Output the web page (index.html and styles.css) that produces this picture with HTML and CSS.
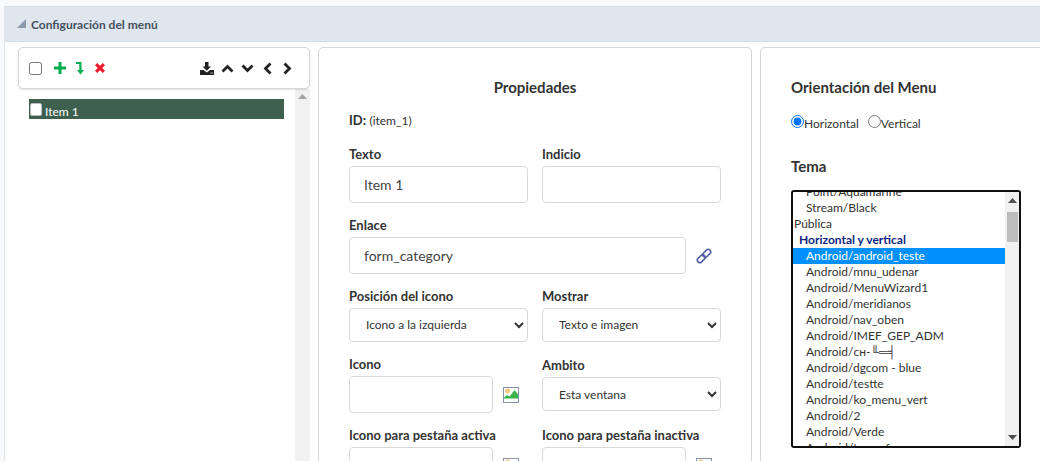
FILE: index.html
```html
<!DOCTYPE html>
<html lang="es">
<head>
<meta charset="utf-8">
<title>Configuración del menú</title>
<link rel="stylesheet" href="styles.css">
</head>
<body>
<div class="page">
  <section class="panel">
    <header class="panel-head">
      <svg class="collapse" width="9" height="9" viewBox="0 0 9 9"><path d="M9 0V9H0Z" fill="#8a99ab"/></svg>
      <span>Configuración del menú</span>
    </header>
    <div class="panel-body">
      <div class="tree-col">
        <div class="toolbar">
          <input type="checkbox" class="check" aria-label="Todo">
          <div class="tools">
            <svg width="12" height="12" viewBox="0 0 12 12"><path d="M4.500 0h3v4.500h4.500v3H7.500V12h-3V7.500H0v-3h4.500Z" fill="#00b050"/></svg>
            <svg width="9" height="14" viewBox="0 0 9 14"><path d="M0 1h5.500v8H8l-3.500 4.500L1 9h2.300V3H0Z" fill="#00b050"/></svg>
            <svg width="10" height="10" viewBox="0 0 11 11"><path d="M2.500 0 5.500 3 8.500 0 11 2.500 8 5.500 11 8.500 8.500 11 5.500 8 2.500 11 0 8.500 3 5.500 0 2.500Z" fill="#ed1c2e"/></svg>
          </div>
          <div class="tools-right">
            <svg width="14" height="13" viewBox="0 0 14 13"><path d="M5 0h3.500v4.500H11L6.800 8.800 2.600 4.500H5ZM0 8h3.500l3.300 2.600L10 8h4v5H0Z" fill="#222"/><path d="M10.500 11h1M12.300 11h.7" stroke="#fff"/></svg>
            <svg width="13" height="9" viewBox="0 0 13 9"><path d="M1.500 7.500 6.500 2.500 11.500 7.500" fill="none" stroke="#222" stroke-width="2.800"/></svg>
            <svg width="13" height="9" viewBox="0 0 13 9"><path d="M1.500 1.500 6.500 6.500 11.500 1.500" fill="none" stroke="#222" stroke-width="2.800"/></svg>
            <svg width="9" height="13" viewBox="0 0 9 13"><path d="M7.500 1.500 2.500 6.500 7.500 11.500" fill="none" stroke="#222" stroke-width="2.800"/></svg>
            <svg width="9" height="13" viewBox="0 0 9 13"><path d="M1.500 1.500 6.500 6.500 1.500 11.500" fill="none" stroke="#222" stroke-width="2.800"/></svg>
          </div>
        </div>
        <div class="tree-wrap">
          <div class="tree">
            <div class="tree-item"><span class="item-box"></span><span class="item-label">Item 1</span></div>
          </div>
          <div class="tree-scroll"><svg width="9" height="5" viewBox="0 0 9 5"><path d="M4.500 0 9 5H0Z" fill="#a3a3a3"/></svg></div>
        </div>
      </div>

      <div class="card props">
        <h3 class="props-title">Propiedades</h3>
        <p class="id-line"><b>ID:</b> <span>(item_1)</span></p>
        <div class="row row-text">
          <label class="field"><span class="lbl">Texto</span><input class="input" value="Item 1"></label>
          <label class="field"><span class="lbl">Indicio</span><input class="input"></label>
        </div>
        <div class="row row-link">
          <label class="field grow"><span class="lbl">Enlace</span>
            <span class="with-icon">
              <input class="input" value="form_category">
              <svg class="link-ico" width="16" height="16" viewBox="0 0 16 16"><g fill="none" stroke="#4f5da3" stroke-width="1.600"><rect x="6.200" y="2.800" width="9" height="5" rx="2.500" transform="rotate(-45 10.700 5.300)"/><rect x=".8" y="8.200" width="9" height="5" rx="2.500" transform="rotate(-45 5.300 10.700)"/></g></svg>
            </span>
          </label>
        </div>
        <div class="row row-select">
          <label class="field"><span class="lbl">Posición del icono</span><select class="select"><option>Icono a la izquierda</option></select></label>
          <label class="field"><span class="lbl">Mostrar</span><select class="select"><option>Texto e imagen</option></select></label>
        </div>
        <div class="row row-icon">
          <label class="field"><span class="lbl">Icono</span>
            <span class="with-icon">
              <input class="input">
              <svg class="img-ico" width="16" height="16" viewBox="0 0 16 16"><rect x=".5" y=".500" width="15" height="15" fill="#fff" stroke="#8494a8"/><circle cx="4.700" cy="4" r="2.500" fill="#efc878"/><path d="M1 11.500V10.500L4 8 6.500 9.500 11.500 3 15 7.500V11.500Z" fill="#3cb34a"/></svg>
            </span>
          </label>
          <label class="field field-shift"><span class="lbl">Ambito</span><select class="select"><option>Esta ventana</option></select></label>
        </div>
        <div class="row row-tabs">
          <label class="field"><span class="lbl">Icono para pestaña activa</span>
            <span class="with-icon">
              <input class="input">
              <svg class="img-ico" width="16" height="16" viewBox="0 0 16 16"><rect x=".5" y=".500" width="15" height="15" fill="#fff" stroke="#8494a8"/><circle cx="4.700" cy="4" r="2.500" fill="#efc878"/><path d="M1 11.500V10.500L4 8 6.500 9.500 11.500 3 15 7.500V11.500Z" fill="#3cb34a"/></svg>
            </span>
          </label>
          <label class="field"><span class="lbl">Icono para pestaña inactiva</span>
            <span class="with-icon">
              <input class="input">
              <svg class="img-ico" width="16" height="16" viewBox="0 0 16 16"><rect x=".5" y=".500" width="15" height="15" fill="#fff" stroke="#8494a8"/><circle cx="4.700" cy="4" r="2.500" fill="#efc878"/><path d="M1 11.500V10.500L4 8 6.500 9.500 11.500 3 15 7.500V11.500Z" fill="#3cb34a"/></svg>
            </span>
          </label>
        </div>
      </div>

      <div class="card theme">
        <h3 class="theme-title">Orientación del Menu</h3>
        <div class="radios">
          <label class="radio"><input type="radio" name="o" checked>Horizontal</label>
          <label class="radio"><input type="radio" name="o">Vertical</label>
        </div>
        <h3 class="theme-title tema">Tema</h3>
        <div class="listbox">
          <div class="list">
            <div class="list-inner">
              <div class="opt">Point/Aquamarine</div>
              <div class="opt">Stream/Black</div>
              <div class="opt top">Pública</div>
              <div class="opt group">Horizontal y vertical</div>
              <div class="opt sel">Android/android_teste</div>
              <div class="opt">Android/mnu_udenar</div>
              <div class="opt">Android/MenuWizard1</div>
              <div class="opt">Android/meridianos</div>
              <div class="opt">Android/nav_oben</div>
              <div class="opt">Android/IMEF_GEP_ADM</div>
              <div class="opt">Android/сн-╙═╡</div>
              <div class="opt">Android/dgcom - blue</div>
              <div class="opt">Android/testte</div>
              <div class="opt">Android/ko_menu_vert</div>
              <div class="opt">Android/2</div>
              <div class="opt">Android/Verde</div>
              <div class="opt">Android/teresaf</div>
            </div>
          </div>
          <div class="list-scroll">
            <svg width="9" height="5" viewBox="0 0 9 5"><path d="M4.500 0 9 5H0Z" fill="#505050"/></svg>
            <div class="thumb"></div>
            <svg class="down" width="9" height="5" viewBox="0 0 9 5"><path d="M0 0H9L4.500 5Z" fill="#505050"/></svg>
          </div>
        </div>
      </div>
    </div>
  </section>
</div>
</body>
</html>
```
FILE: styles.css
```css
* { box-sizing: border-box; }
html, body { margin: 0; height: 100%; overflow: hidden; }
body { background: #f7f9fc; font-family: Lato, "Liberation Sans", sans-serif; color: #333; }
.page { height: 461px; padding: 6px 0 0 4px; overflow: hidden; }
.panel { background: #fff; border-left: 1px solid #dde4ec; height: 455px; }
.panel-head {
  height: 36px; background: #dfe6ee; border-top: 1px solid #d3dde6; border-bottom: 1px solid #d3dde6;
  display: flex; align-items: center; padding-left: 12px; gap: 5px;
  font-size: 12px; font-weight: 700; color: #46505e;
}
.panel-head .collapse { margin-top: -2px; }
.panel-body { display: flex; align-items: flex-start; padding: 5px 0 0 13px; gap: 8px; }

.tree-col { width: 292px; flex: none; }
.toolbar {
  height: 42px; background: #fff; border: 1px solid #d6d6d6; border-radius: 5px;
  box-shadow: 0 1px 2px rgba(0,0,0,.12);
  display: flex; align-items: center; padding-left: 10px; position: relative;
}
.check { width: 13px; height: 13px; margin: 0; }
.tools { display: flex; align-items: center; margin-left: 12px; gap: 10px; }
.tools-right { display: flex; align-items: center; margin-left: auto; padding-right: 17px; gap: 7px; }
.tools-right svg:nth-child(4) { margin-left: 2px; }
.tools-right svg:nth-child(5) { margin-left: 4px; }
.tree-wrap { display: flex; height: 372px; }
.tree { flex: 1; padding: 10px 11px 0 11px; }
.tree-item { height: 20px; background: #3f5f4f; display: flex; align-items: center; position: relative; }
.item-box { width: 12px; height: 13px; background: #fff; border: 1px solid #bbb; border-radius: 2px; margin: 0 3px 0 1px; flex: none; }
.item-label { color: #fff; font-size: 12px; padding-top: 6px; line-height: 14px; }
.tree-scroll { width: 15px; background: #f1f1f1; display: flex; justify-content: center; padding-top: 5px; }
.tree-scroll svg { display: block; }

.card { background: #fff; border: 1px solid #d6d6d6; border-radius: 5px; flex: none; height: 430px; }
.props { width: 434px; padding: 0 30px; }
.props-title { margin: 29px 0 0; text-align: center; font-size: 15px; line-height: 20px; font-weight: 700; color: #333; }
.id-line { margin: 14px 0 0; font-size: 13px; line-height: 18px; color: #333; }
.id-line b { font-size: 13px; }
.id-line span { font-size: 12px; }
.row { display: flex; gap: 14px; }
.row-text { margin-top: 15px; }
.row-link { margin-top: 13px; }
.row-select { margin-top: 13px; }
.row-icon { margin-top: 13px; }
.row-tabs { margin-top: 13px; }
.field { display: block; width: 179px; }
.field.grow { width: 372px; }
.field-shift .lbl { padding-top: 1px; }
.lbl { display: block; font-size: 13px; line-height: 18px; font-weight: 700; color: #333; margin-bottom: 3px; }
.input {
  display: block; width: 100%; height: 37px; border: 1px solid #d9d9d9; border-radius: 4px;
  padding: 0 14px; font: 14px Lato, sans-serif; color: #444; background: #fff;
}
.select {
  display: block; width: 100%; height: 34px; border: 1px solid #d9d9d9; border-radius: 4px;
  padding: 0 12px; font: 12px Lato, sans-serif; color: #333; background: #fff;
}
.row-select .select { padding-bottom: 2px; }
.with-icon { display: flex; align-items: center; }
.row-link .input { width: 337px; flex: none; }
.row-icon .with-icon .input, .row-tabs .with-icon .input { width: 144px; flex: none; }
.link-ico { margin-left: 10px; }
.img-ico { margin-left: 10px; flex: none; }

.theme { width: 300px; padding: 0 30px; }
.theme-title { margin: 29px 0 0; font-size: 15px; line-height: 20px; font-weight: 700; color: #333; }
.radios { display: flex; gap: 9px; margin-top: 19px; }
.radio { display: flex; align-items: center; font-size: 12px; line-height: 16px; color: #333; }
.radio input { margin: 0; width: 13px; height: 13px; position: relative; top: -3px; }
.tema { margin-top: 24px; }
.listbox { display: flex; width: 230px; height: 258px; margin-top: 14px; border: 2px solid #111; border-radius: 3px; background: #fff; overflow: hidden; }
.list { flex: 1; overflow: hidden; }
.list-inner { margin-top: -8px; }
.opt { height: 16px; line-height: 16px; font-size: 12px; padding-left: 13px; color: #333; white-space: nowrap; }
.opt.top { padding-left: 1px; }
.opt.group { padding-left: 6px; font-weight: 700; color: #101f80; }
.opt.sel { background: #0090ff; color: #fff; }
.list-scroll { width: 14px; background: #f1f1f1; flex: none; display: flex; flex-direction: column; align-items: center; padding: 6px 0; }
.thumb { width: 11px; height: 30px; background: #bdbdbd; margin-top: 9px; }
.down { margin-top: auto; }
```
